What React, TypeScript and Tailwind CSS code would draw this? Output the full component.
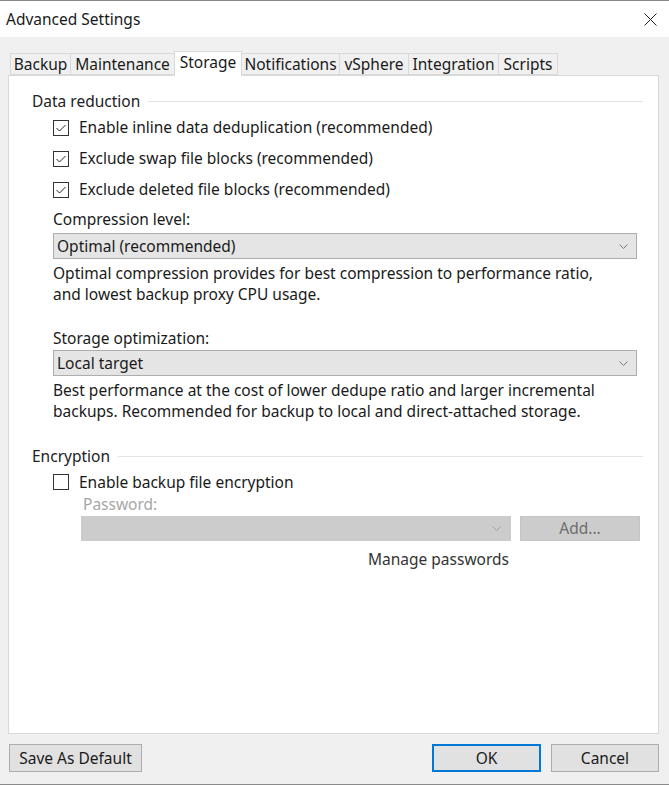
import React from "react";

const tabs = [
  { name: "Backup", w: "w-[61px]" },
  { name: "Maintenance", w: "w-[105px]" },
  { name: "Storage", w: "w-[68px]" },
  { name: "Notifications", w: "w-[99px]" },
  { name: "vSphere", w: "w-[70px]" },
  { name: "Integration", w: "w-[91px]" },
  { name: "Scripts", w: "w-[60px]" },
];

function Chevron({ color = "#7a7a7a" }: { color?: string }) {
  return (
    <svg width="9" height="5" viewBox="0 0 9 5" fill="none">
      <polyline points="0.5,0.5 4.5,4.5 8.5,0.5" stroke={color} strokeWidth="1" />
    </svg>
  );
}

function CheckBox({ checked }: { checked: boolean }) {
  return (
    <div className="w-[16px] h-[16px] border border-[#333333] bg-white flex items-center justify-center shrink-0">
      {checked && (
        <svg width="14" height="14" viewBox="0 0 14 14" fill="none">
          <polyline points="2.5,7 5.5,10 11.5,4" stroke="#222222" strokeWidth="1" />
        </svg>
      )}
    </div>
  );
}

function CheckRow({ label, checked }: { label: string; checked: boolean }) {
  return (
    <div className="h-[31px] flex items-center pl-[21px]">
      <CheckBox checked={checked} />
      <span className="ml-[10px]">{label}</span>
    </div>
  );
}

function Heading({ text }: { text: string }) {
  return (
    <div className="h-[21px] flex items-center text-[#222222]">
      <span>{text}</span>
      <div className="flex-1 h-px bg-[#e3e3e3] ml-[8px]" />
    </div>
  );
}

function Select({ value }: { value: string }) {
  return (
    <div className="ml-[21px] mr-[6px] h-[26px] bg-[#e5e5e5] border border-[#adadad] flex items-center justify-between pl-[3px] pr-[8px]">
      <span>{value}</span>
      <Chevron />
    </div>
  );
}

export default function App() {
  return (
    <div
      className="w-[669px] h-[785px] bg-[#f0f0f0] border-t border-b border-[#8a8a8a] flex flex-col text-[15.5px] text-[#1a1a1a] leading-[21px]"
      style={{ fontFamily: '"Noto Sans", "Open Sans", sans-serif' }}
    >
      {/* title bar */}
      <div className="h-[36px] bg-white flex items-center justify-between pl-[6px] pr-[12px] shrink-0">
        <span className="text-[15.5px]">Advanced Settings</span>
        <svg width="13" height="13" viewBox="0 0 13 13" fill="none">
          <line x1="0.5" y1="0.5" x2="12.5" y2="12.5" stroke="#222222" strokeWidth="1" />
          <line x1="12.5" y1="0.5" x2="0.5" y2="12.5" stroke="#222222" strokeWidth="1" />
        </svg>
      </div>

      <div className="flex-1 flex flex-col pl-[8px] pr-[10px]">
        {/* tabs */}
        <div className="flex items-end pl-[2px] mt-[13px] h-[25px] relative z-10">
          {tabs.map((t) =>
            t.name === "Storage" ? (
              <div
                key={t.name}
                className={`${t.w} h-[25px] -mb-px -ml-px bg-white border border-b-0 border-[#d9d9d9] flex justify-center items-start`}
              >
                {t.name}
              </div>
            ) : (
              <div
                key={t.name}
                className={`${t.w} h-[22px] bg-[#f0f0f0] border border-[#d9d9d9] -ml-px first:ml-0 flex items-center justify-center`}
              >
                {t.name}
              </div>
            )
          )}
        </div>

        {/* panel */}
        <div className="h-[659px] bg-white border border-[#d9d9d9] pl-[23px] pr-[15px] flex flex-col">
          <div className="mt-[15px]">
            <Heading text="Data reduction" />
          </div>
          <CheckRow label="Enable inline data deduplication (recommended)" checked />
          <CheckRow label="Exclude swap file blocks (recommended)" checked />
          <CheckRow label="Exclude deleted file blocks (recommended)" checked />

          <div className="h-[28px] flex items-center pl-[21px]">Compression level:</div>
          <Select value="Optimal (recommended)" />
          <div className="pl-[21px] mt-[4px]">
            Optimal compression provides for best compression to performance ratio,
            <br />
            and lowest backup proxy CPU usage.
          </div>

          <div className="h-[24px] flex items-center pl-[21px] mt-[21px]">Storage optimization:</div>
          <Select value="Local target" />
          <div className="pl-[21px] mt-[4px]">
            Best performance at the cost of lower dedupe ratio and larger incremental
            <br />
            backups. Recommended for backup to local and direct-attached storage.
          </div>

          <div className="mt-[24px]">
            <Heading text="Encryption" />
          </div>
          <div className="h-[30px] flex items-center pl-[21px]">
            <CheckBox checked={false} />
            <span className="ml-[10px]">Enable backup file encryption</span>
          </div>
          <div className="h-[14px] flex items-center pl-[51px] text-[#a6a6a6]">Password:</div>
          <div className="flex ml-[49px] mr-[3px] mt-[5px] gap-[9px]">
            <div className="flex-1 h-[25px] bg-[#cccccc] flex items-center justify-end pr-[10px]">
              <Chevron color="#a0a0a0" />
            </div>
            <div className="w-[120px] h-[25px] bg-[#cccccc] border border-[#c4c4c4] flex items-center justify-center text-[#6d6d6d]">
              Add...
            </div>
          </div>
          <div className="flex justify-end mr-[134px] mt-[8px] h-[20px] items-center text-[#333333]">
            Manage passwords
          </div>
        </div>

        {/* footer */}
        <div className="flex items-center mt-[10px] pl-[1px]">
          <button className="w-[133px] h-[28px] bg-[#e1e1e1] border border-[#adadad] text-[#1a1a1a]">
            Save As Default
          </button>
          <div className="flex-1" />
          <button className="w-[109px] h-[28px] bg-[#e1e1e1] border-2 border-[#0078d7] text-[#1a1a1a]">
            OK
          </button>
          <button className="w-[108px] h-[28px] ml-[10px] bg-[#e1e1e1] border border-[#adadad] text-[#1a1a1a]">
            Cancel
          </button>
        </div>
      </div>
    </div>
  );
}
